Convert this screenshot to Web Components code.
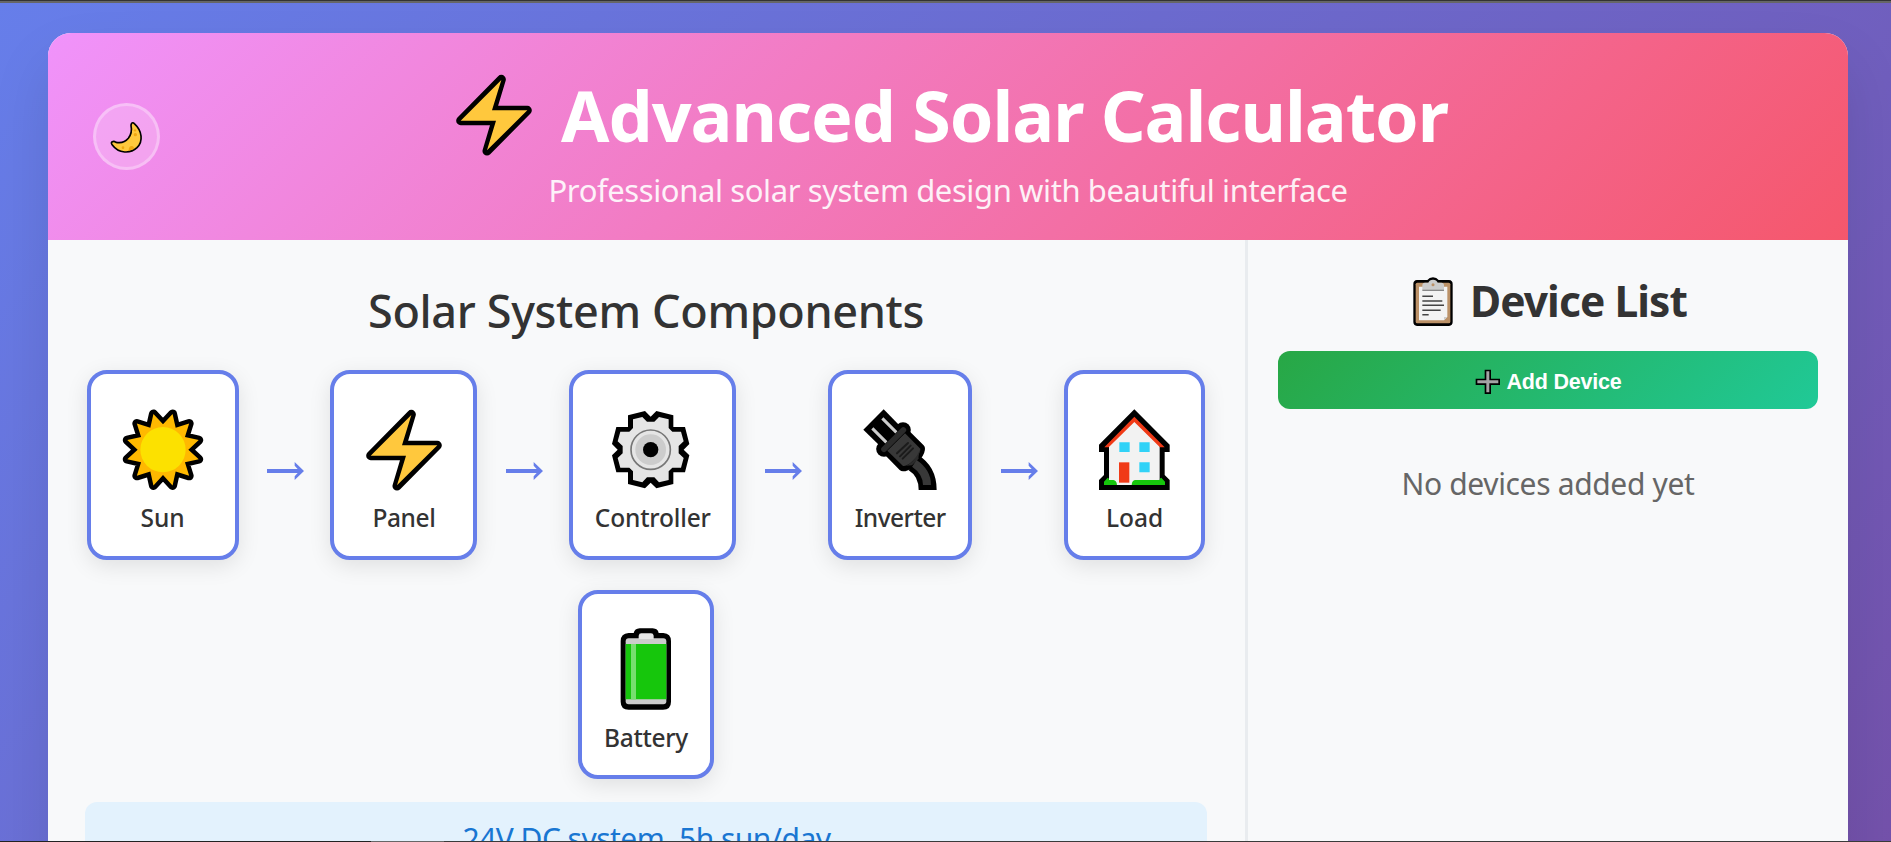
<!DOCTYPE html>
<html lang="en">
<head>
<meta charset="utf-8">
<title>Advanced Solar Calculator</title>
<style>
html,body{margin:0;height:100%;overflow:hidden}
body{font-family:"Noto Sans","Open Sans",sans-serif;color:#333}
</style>
</head>
<body>
<solar-app></solar-app>
<script>
const BOLT='<path d="M1022 431L994 524H1100L979 646L1006 555H900Z" fill="#ffc83d" stroke="#000" stroke-width="27" stroke-linejoin="round"/><path d="M1022 433L994 524H1100L979 644L1006 555H900Z" fill="#ffc83d"/>';
const rays=r=>Array.from({length:24},(_,i)=>{const a=i*Math.PI/12,k=i%2?r:76;return (278+k*Math.sin(a)).toFixed(1)+','+(539-k*Math.cos(a)).toFixed(1)}).join(' ');
const ICONS={
bolt:['874 412 252 252',BOLT],
sun:['152 414 252 252',`<polygon points="${rays(111)}" fill="#ffb900" stroke="#000" stroke-width="27" stroke-linejoin="round"/><polygon points="${rays(111)}" fill="#ffb900"/><circle cx="278" cy="539" r="68" fill="#fce100"/>`],
gear:['392 414 252 252','<path d="M443 436L494 423L511 440L528 423L579 436V471H614L627 522L610 539L627 556L614 607H579V642L528 655L511 638L494 655L443 642V607H408L395 556L412 539L395 522L408 471H443Z"/><path d="M458 448L486 441L500 455H522L536 441L565 448V474L576 485H602L610 514L595 528V550L610 564L602 593H576L565 604V630L536 637L522 622H500L486 637L458 630V604L447 593H420L412 564L427 550V528L412 514L420 485H447L458 474Z" fill="#e5e5e5"/><circle cx="511" cy="539" r="59" fill="#e5e5e5" stroke="#767676" stroke-width="5"/><circle cx="511" cy="539" r="46" fill="#ccc"/><circle cx="511" cy="539" r="23"/>'],
plug:['174 174 252 252','<path d="M251 178L190 239L240 288L300 228Z"/><g fill="none" stroke="#000"><path d="M252 297L309 240" stroke-width="47" stroke-linecap="round"/><path d="M340 338Q383 364 383 420" stroke-width="54"/></g><path d="M262 302L315 250L361 296Q362 304 350 320L334 338Q318 350 309 350Z" stroke="#000" stroke-width="28" stroke-linejoin="round"/><path d="M262 302L315 250L361 296Q362 304 350 322L334 337Q318 350 309 348Z" fill="#383838"/><path d="M309 348Q322 350 337 334Q353 318 361 298Q354 322 356 326L336 346Z" fill="#2b2b2b"/><path d="M343 340Q381 366 381 405" fill="none" stroke="#383838" stroke-width="24"/><path d="M252 298L310 240" stroke="#2b2b2b" stroke-width="17" stroke-linecap="round"/><g stroke="#ccc" stroke-width="9"><path d="M247 205L289 247M217 235L259 277"/></g><g stroke="#1b1b1b" stroke-width="6" stroke-linecap="round"><path d="M291 310L324 279M300 319L332 287M308 326L339 295"/></g>'],
house:['879 174 252 252','<path d="M1003 178L1109 284V306H1094V375L1109 390V420H897V390L912 375V306H897V284Z"/><path d="M1003 212L1079 287V405H927V287Z" fill="#f2f2f2"/><path d="M1003 200L1094 292H1080L1003 216L926 292H913Z" fill="#f03a17"/><path d="M958 277h31v29h-31zM1018 277h31v29h-31zM1018 337h31v30h-31z" fill="#31d2f7"/><path d="M957 337h31v61h-31z" fill="#f03a17"/><path d="M912 405V395L923 383Q927 383 927 390H940Q950 391 951 405ZM995 405Q996 391 1005 390H1079Q1080 383 1084 383L1095 395V405Z" fill="#16c60c"/>'],
battery:['192 173 252 252','<path d="M299 174H338Q354 175 356 188H370Q393 190 393 212V394Q393 418 369 418H266Q242 418 242 394V212Q242 190 266 188H281Q284 175 299 174Z"/><rect x="257" y="204" width="122" height="198" rx="9" fill="#ccc"/><path d="M296 206V196Q297 189 304 189H333Q340 189 341 196V206Z" fill="#e5e5e5"/><path d="M257 221H379V387H257Z" fill="#16c60c"/><path d="M273 221h15v166h-15z" fill="#77de6f"/>'],
clipboard:['12 18 144 150','<path d="M36 30H67Q73 22 84 22T101 30H132Q143 31 143 42V156Q143 167 132 168H36Q25 167 25 156V42Q25 31 36 30Z"/><rect x="32" y="38" width="104" height="122" rx="5" fill="#bb9167"/><path d="M42 50H127V140L117 151H42Z" fill="#f3f3f3"/><path d="M117 151V141H127Z" fill="#ccc"/><path d="M52 60V46Q52 38 60 38H70Q73 29 84 29T98 38H109Q117 38 117 46V60Z" fill="#ccc"/><circle cx="84" cy="44" r="4.5" fill="#bb9167"/><path d="M52 61H117" stroke="#888" stroke-width="4"/><path d="M52 79H84M52 93H112M52 106H117M52 121H107M52 134H71" stroke="#444" stroke-width="4.5"/>'],
plus:['204 291 90 90','<path d="M239 299H258V326H285V345H258V372H239V345H212V326H239Z"/><path d="M244 304H253V331H280V340H253V367H244V340H217V331H244Z" fill="#a5a3a5"/>'],
moon:['18 18 183 183','<path d="M125 70Q128 66 133 71C157 93 160 124 141 143C121 162 86 161 67 135Q61 127 68 125Q72 123 78 127C92 130 105 127 115 115C124 103 126 90 123 77Q123 72 125 70Z" fill="#ffc83d" stroke="#000" stroke-width="5"/><g fill="#efa611"><circle cx="136" cy="104" r="5"/><circle cx="135" cy="91" r="3.5"/><circle cx="99" cy="143" r="4"/><path d="M116 152Q116 138 125 138Q133 139 132 147Z"/></g>'],
arrow:['0 0 111 54','<path d="M0 21H92L83 11V0L111 27L83 54V43L92 33H0Z"/>']
};
function define(name,html,after){
  const t=document.createElement('template');t.innerHTML=html;
  customElements.define(name,class extends HTMLElement{
    connectedCallback(){
      if(this.shadowRoot)return;
      this.attachShadow({mode:'open'}).append(t.content.cloneNode(true));
      if(after)after(this,this.shadowRoot);
    }
  });
}
define('ui-icon','<style>:host{display:block;flex:none}svg{display:block;width:100%;height:100%}</style><svg></svg>',(h,r)=>{
  const [v,s]=ICONS[h.getAttribute('name')],g=r.querySelector('svg');
  g.setAttribute('viewBox',v);g.setAttribute('fill',h.getAttribute('name')==='arrow'?'#667eea':'#000');g.innerHTML=s;
});
/* One line of text, tracked so that it spans the width it is given. */
define('fit-text','<style>:host{display:block;white-space:nowrap;flex:none}span{display:inline-block}</style><span><slot></slot></span>',(h,r)=>{
  const w=+h.getAttribute('width'),s=r.querySelector('span');
  const n=s.getBoundingClientRect().width;
  h.style.letterSpacing=((w-n)/h.textContent.length).toFixed(3)+'px';
  h.style.width=w+'px';
});
define('theme-toggle',`<style>:host{display:block}button{all:unset;box-sizing:border-box;display:block;width:67px;height:67px;border:3px solid rgba(255,255,255,.3);border-radius:50%;background:rgba(255,255,255,.2);background-clip:border-box}ui-icon{width:61px;height:61px}</style><button aria-label="Toggle theme"><ui-icon name="moon"></ui-icon></button>`);
define('app-header',`<style>
:host{display:flex;flex-direction:column;align-items:center;position:relative;box-sizing:border-box;height:207px;padding-top:36.5px;background:linear-gradient(135deg,#f093fb 0%,#f5576c 100%);color:#fff}
theme-toggle{position:absolute;left:45px;top:70px}
h1{margin:0;display:flex;align-items:center;gap:25px;padding-left:6px;font-size:70px;line-height:90px;font-weight:700}
h1 ui-icon{width:84px;height:84px;margin:1px 0 0 -2px}
p{margin:9px 0 0;font-size:31px;line-height:42px;opacity:.9}
</style><theme-toggle></theme-toggle><h1><ui-icon name="bolt"></ui-icon><fit-text width="887">Advanced Solar Calculator</fit-text></h1><p><fit-text width="799">Professional solar system design with beautiful interface</fit-text></p>`);
define('system-card',`<style>
:host{display:flex;flex:none;flex-direction:column;align-items:center;box-sizing:border-box;height:190px;border:4px solid #667eea;border-radius:20px;background:#fff;padding-top:33.5px;box-shadow:0 6px 22px rgba(0,0,0,.1);font-size:24.5px;line-height:36px;font-weight:500}
ui-icon{width:84px;height:84px;margin-bottom:8px}
</style><slot></slot>`,(h,r)=>{
  h.style.width=h.getAttribute('width')+'px';
  const i=document.createElement('ui-icon');
  i.setAttribute('name',h.getAttribute('icon'));
  r.insertBefore(i,r.querySelector('slot'));
});
define('flow-arrow',`<style>:host{flex:1;display:flex;justify-content:center;align-items:center;padding:12px 0 0 2px}ui-icon{width:37px;height:18px}</style><ui-icon name="arrow"></ui-icon>`);
define('system-panel',`<style>
:host{display:flex;flex-direction:column;align-items:center;box-sizing:border-box;width:1200px;border-right:3px solid #e9ecef;padding:41px 38px 0 37px;background:#f8f9fa}
h2{margin:0 0 29px;font-size:45px;line-height:60px;font-weight:500}
.row{display:flex;align-self:stretch;padding:0 2px 0 1.6px;margin-bottom:30px}
.last{height:189px}
.info{align-self:stretch;margin-top:23px;height:120px;border-radius:12px;background:#e3f2fd;color:#1976d2;font-size:30px;line-height:44px;padding:15px 0 0 1px;box-sizing:border-box;display:flex;justify-content:center}
</style>
<h2><fit-text width="556">Solar System Components</fit-text></h2>
<div class="row">
<system-card width="152" icon="sun"><fit-text width="44">Sun</fit-text></system-card><flow-arrow></flow-arrow>
<system-card width="147" icon="bolt"><fit-text width="63">Panel</fit-text></system-card><flow-arrow></flow-arrow>
<system-card width="167" icon="gear"><fit-text width="116">Controller</fit-text></system-card><flow-arrow></flow-arrow>
<system-card width="144" icon="plug"><fit-text width="91">Inverter</fit-text></system-card><flow-arrow></flow-arrow>
<system-card width="141" icon="house"><fit-text width="57">Load</fit-text></system-card>
</div>
<system-card class="last" width="136" icon="battery"><fit-text width="84">Battery</fit-text></system-card>
<div class="info"><fit-text width="368">24V DC system, 5h sun/day</fit-text></div>`);
define('device-panel',`<style>
:host{display:block;flex:1;padding:31px 30px 0;background:#f8f9fa}
h2{margin:0 0 20px;display:flex;justify-content:center;align-items:center;gap:13px;font-size:42.5px;line-height:60px;font-weight:700}
h2 ui-icon{width:48px;height:50px;margin-top:0}
button{all:unset;box-sizing:border-box;width:100%;height:58px;display:flex;justify-content:center;align-items:center;gap:4px;padding-right:2px;border-radius:12px;background:linear-gradient(135deg,#28a745,#20c997);color:#fff;font:700 21.5px/30px "Liberation Sans",Arial,sans-serif}
button ui-icon{width:30px;height:30px;margin-top:4px}
button fit-text{margin-top:3px}
p{margin:53px 0 0;display:flex;justify-content:center;font-size:30px;line-height:44px;color:#666}
</style><h2><ui-icon name="clipboard"></ui-icon><fit-text width="217">Device List</fit-text></h2>
<button><ui-icon name="plus"></ui-icon><fit-text width="115">Add Device</fit-text></button>
<p><fit-text width="293">No devices added yet</fit-text></p>`);
define('solar-app',`<style>
:host{display:block;height:842px;overflow:hidden;position:relative;background:linear-gradient(135deg,#667eea 0%,#764ba2 100%) 0 0/1891px 1250px no-repeat}
.top{height:3px;background:linear-gradient(#333 0 1px,#666 1px)}
.box{width:1800px;margin:30px auto 0 48px;height:1100px;border-radius:23px;overflow:hidden;box-shadow:0 30px 60px rgba(0,0,0,.1);background:#f8f9fa}
.main{display:flex;height:893px}
.edge{position:absolute;left:0;right:0;bottom:0;height:1px;background:linear-gradient(90deg,#222 0 371px,#666 371px 444px,#3a3a3a 444px)}
</style><div class="top"></div><div class="box"><app-header></app-header><div class="main"><system-panel></system-panel><device-panel></device-panel></div></div><div class="edge"></div>`);
</script>
</body>
</html>
